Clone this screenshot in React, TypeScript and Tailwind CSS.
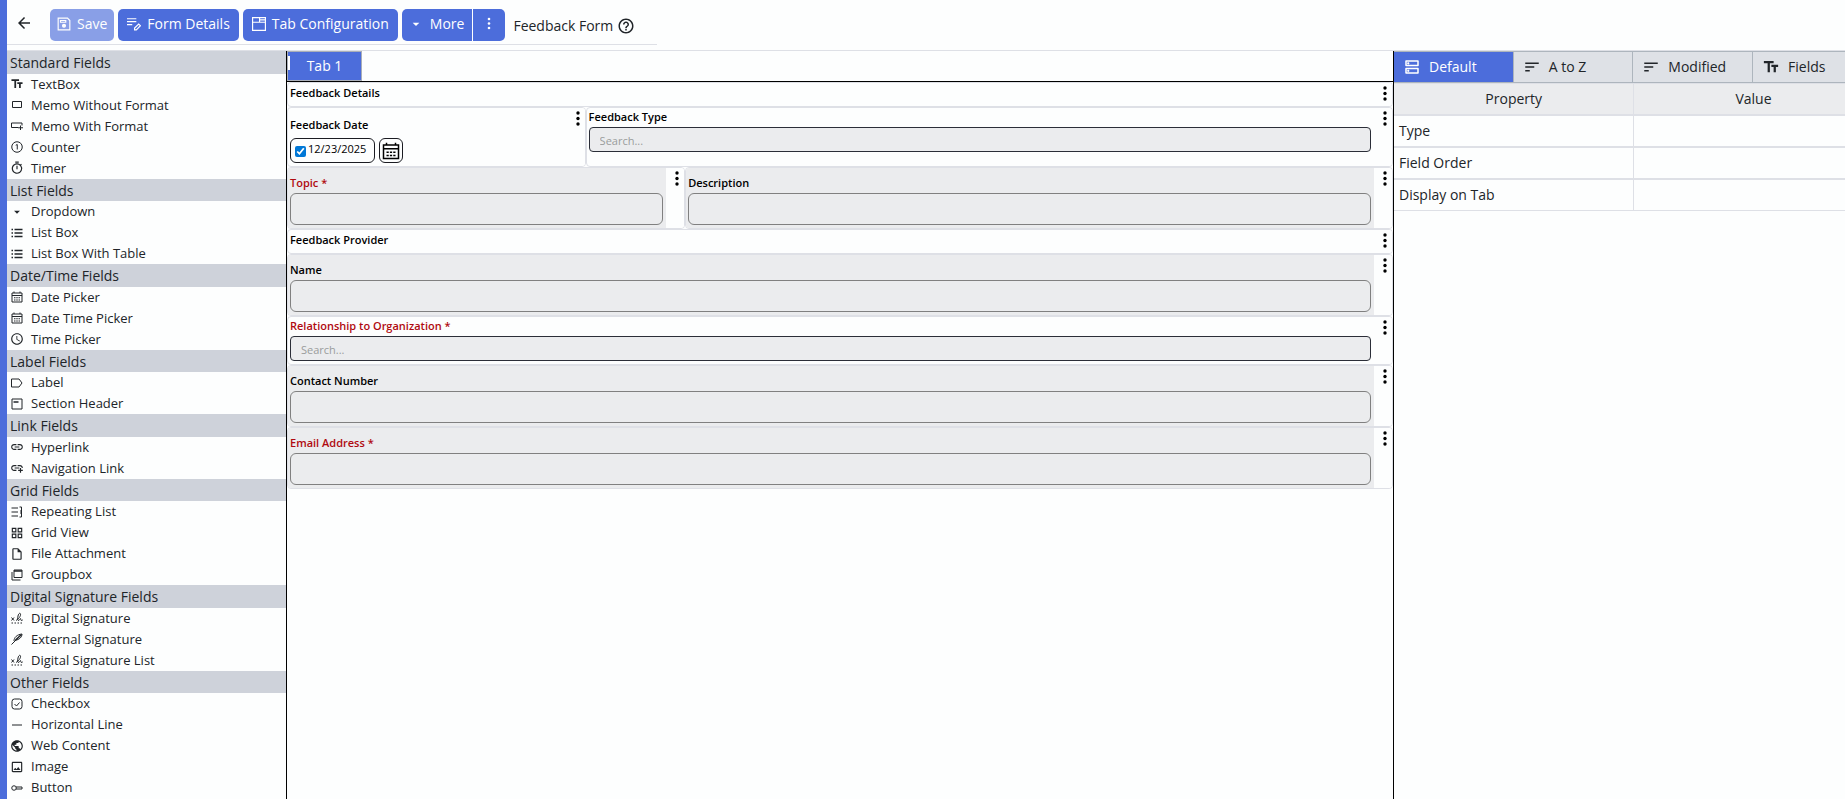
import type { ReactNode } from "react";
import clsx from "clsx";
import {
  MdAddLink,
  MdArrowBack,
  MdArrowDropDown,
  MdHelpOutline,
  MdLink,
  MdOutlineDns,
  MdOutlineGridView,
  MdOutlineImage,
  MdOutlineInsertDriveFile,
  MdOutlineTimer,
  MdPublic,
  MdSchedule,
  MdSort,
  MdTextFields,
} from "react-icons/md";

function Glyph({ children, className = "mx-px h-3 w-3" }: { children: ReactNode; className?: string }) {
  return (
    <svg
      viewBox="0 0 24 24"
      fill="none"
      stroke="currentColor"
      strokeWidth="2"
      className={className}
      aria-hidden="true"
    >
      {children}
    </svg>
  );
}

const SignatureGlyph = () => (
  <Glyph>
    <path d="M1 11l5 6M6 11l-5 6M1 22h3M7 22h3M13 22h3M19 22h3" />
    <path d="M10 17c5-3 10-9 9-13-1-3-4-1-5 4s-1 9 1 9 3-4 4-4 0 4 2 4 2-1 3-2" />
  </Glyph>
);

const ListGlyph = () => (
  <Glyph>
    <path d="M1 5h3M1 12h3M1 19h3M7 5h16M7 12h16M7 19h16" strokeWidth="3" />
  </Glyph>
);

const CalendarGlyph = ({ className }: { className?: string }) => (
  <Glyph className={className}>
    <path d="M2 4h20v18H2zM2 9h20M6 1v3M18 1v3" />
    <path d="M6 13.500h3M10.500 13.500h3M15 13.500h3M6 18h3M10.500 18h3M15 18h3" />
  </Glyph>
);

const md = "h-3.5 w-3.5";

const fieldGroups: { title: string; items: { label: string; icon: ReactNode }[] }[] = [
  {
    title: "Standard Fields",
    items: [
      { label: "TextBox", icon: <MdTextFields className={md} /> },
      { label: "Memo Without Format", icon: <Glyph><path d="M3 5h18v12H3z" /></Glyph> },
      {
        label: "Memo With Format",
        icon: <Glyph><path d="M14 15H1V6h21v5M19 11v9M14 15.500h10" /></Glyph>,
      },
      {
        label: "Counter",
        icon: <Glyph><circle cx="12" cy="12" r="10.500" /><path d="M9.500 8.500l3-1.500v10" /></Glyph>,
      },
      { label: "Timer", icon: <MdOutlineTimer className={md} /> },
    ],
  },
  {
    title: "List Fields",
    items: [
      { label: "Dropdown", icon: <MdArrowDropDown className={md} /> },
      { label: "List Box", icon: <ListGlyph /> },
      { label: "List Box With Table", icon: <ListGlyph /> },
    ],
  },
  {
    title: "Date/Time Fields",
    items: [
      { label: "Date Picker", icon: <CalendarGlyph /> },
      { label: "Date Time Picker", icon: <CalendarGlyph /> },
      { label: "Time Picker", icon: <MdSchedule className={md} /> },
    ],
  },
  {
    title: "Label Fields",
    items: [
      { label: "Label", icon: <Glyph><path d="M1 4h15l6 8-6 8H1z" /></Glyph> },
      {
        label: "Section Header",
        icon: <Glyph><path d="M2 2h20v20H2z" /><path d="M5 8h10" strokeWidth="3" /></Glyph>,
      },
    ],
  },
  {
    title: "Link Fields",
    items: [
      { label: "Hyperlink", icon: <MdLink className={md} /> },
      { label: "Navigation Link", icon: <MdAddLink className={md} /> },
    ],
  },
  {
    title: "Grid Fields",
    items: [
      {
        label: "Repeating List",
        icon: <Glyph><path d="M1 4h13M1 12h13M1 20h13M17 2h4v8h-3M21 10v4h-3M21 14v8h-4" /></Glyph>,
      },
      { label: "Grid View", icon: <MdOutlineGridView className={md} /> },
      { label: "File Attachment", icon: <MdOutlineInsertDriveFile className={md} /> },
      {
        label: "Groupbox",
        icon: <Glyph><path d="M6 2h16v15H6z" /><path d="M6 4h16" strokeWidth="3" /><path d="M2 6v16h17" /></Glyph>,
      },
    ],
  },
  {
    title: "Digital Signature Fields",
    items: [
      { label: "Digital Signature", icon: <SignatureGlyph /> },
      {
        label: "External Signature",
        icon: (
          <Glyph>
            <path d="M1 23L15 9M6 16C6 9 12 3 22 2c0 6-5 11-14 13" />
            <path d="M9 14L21 3" strokeWidth="3" />
          </Glyph>
        ),
      },
      { label: "Digital Signature List", icon: <SignatureGlyph /> },
    ],
  },
  {
    title: "Other Fields",
    items: [
      {
        label: "Checkbox",
        icon: <Glyph><rect x="2" y="2" width="20" height="20" rx="5" /><path d="M7 12l4 4 6-7" /></Glyph>,
      },
      { label: "Horizontal Line", icon: <Glyph><path d="M2 12h20" /></Glyph> },
      { label: "Web Content", icon: <MdPublic className={md} /> },
      { label: "Image", icon: <MdOutlineImage className={md} /> },
      {
        label: "Button",
        icon: <Glyph><circle cx="6" cy="12" r="4.500" /><path d="M10 10h12v4H10" /></Glyph>,
      },
    ],
  },
];

function Kebab({ label }: { label: string }) {
  return (
    <button type="button" aria-label={label} className="flex w-[18px] shrink-0 justify-end bg-[#fdfefe] pt-[3px] pr-[5px]">
      <svg viewBox="0 0 4 15" fill="currentColor" className="h-[15px] w-1">
        <circle cx="2" cy="2" r="1.700" />
        <circle cx="2" cy="7.500" r="1.700" />
        <circle cx="2" cy="13" r="1.700" />
      </svg>
    </button>
  );
}

interface CellProps {
  label: string;
  id?: string;
  kind: "header" | "text" | "search" | "date";
  required?: boolean;
  className?: string;
}

function Cell({ label, id, kind, required, className = "w-full" }: CellProps) {
  return (
    <div className={clsx("flex overflow-hidden rounded border border-[#dee0e6]", className)}>
      <div
        className={clsx(
          "min-w-0 flex-1 pr-[3px] pl-0.5",
          kind === "header" && "pb-1",
          kind === "text" && "bg-[#ebecee] pt-1.5 pb-[3px]",
          kind === "search" && "pb-[3px]",
          kind === "date" && "pt-2 pb-[3px]",
        )}
      >
        {kind === "header" ? (
          <h3 className="text-[11px] leading-[19px] font-semibold">{label}</h3>
        ) : (
          <label
            htmlFor={id}
            className={clsx(
              "block text-[11px] leading-[18px] font-semibold",
              kind === "date" ? "mb-1" : "mb-px",
              required && "text-[#b00a10]",
            )}
          >
            {required ? `${label} *` : label}
          </label>
        )}
        {kind === "text" && (
          <input id={id} type="text" className="block h-8 w-full rounded-md border border-[#808080] px-2 text-xs" />
        )}
        {kind === "search" && (
          <input
            id={id}
            type="text"
            placeholder="Search..."
            className="block h-[25px] w-full rounded border border-[#2b2e38] bg-[#ebecee] px-2.5 pt-0.5 text-[11px] placeholder:text-[#9a9c9c]"
          />
        )}
        {kind === "date" && (
          <div className="flex gap-1">
            <div className="flex h-[25px] w-[85px] items-center gap-0.5 rounded-md border border-[#1b1c22] pl-1">
              <input
                type="checkbox"
                defaultChecked
                aria-label="Use feedback date"
                className="mt-0.5 h-[11px] w-[11px] shrink-0 accent-[#0078d7]"
              />
              <input id={id} type="text" defaultValue="12/23/2025" className="w-full min-w-0 pb-0.5 text-[11px]" />
            </div>
            <button
              type="button"
              aria-label="Open calendar"
              className="flex h-[25px] w-6 items-center justify-center rounded-md border border-[#1b1c22]"
            >
              <CalendarGlyph className="h-[18px] w-[18px] shrink-0" />
            </button>
          </div>
        )}
      </div>
      <Kebab label={`${label} options`} />
    </div>
  );
}

function Toolbar() {
  const button = "flex h-8 items-center rounded-[5px] bg-[#4c6ddb] pb-0.5 text-sm whitespace-nowrap text-white";
  return (
    <header className="flex h-[45px] w-[650px] shrink-0 items-center border-b border-[#dee0e6] pt-[5px]">
      <button type="button" aria-label="Back" className="ml-2 flex w-[35px] shrink-0 justify-start pb-1">
        <MdArrowBack className="h-[18px] w-[18px]" />
      </button>
      <div className="flex gap-1">
        <button type="button" disabled className={clsx(button, "gap-1.5 px-[7px] opacity-65")}>
          <Glyph className="h-3.5 w-3.5">
            <path d="M2 2h16l4 4v16H2z" />
            <path d="M6 6h9v3H6z" />
            <circle cx="12" cy="15" r="2.500" fill="currentColor" />
          </Glyph>
          Save
        </button>
        <button type="button" className={clsx(button, "gap-1.5 px-[9px]")}>
          <Glyph className="h-3.5 w-3.5">
            <path d="M0 3h16M0 8h16M0 13h9M13 22v-3l7-7 3 3-7 7z" />
          </Glyph>
          Form Details
        </button>
        <button type="button" className={clsx(button, "gap-1.5 px-[9px]")}>
          <Glyph className="h-3.5 w-3.5">
            <path d="M1 1h22v22H1zM1 9h22M13 1v8M13 5h10" />
          </Glyph>
          Tab Configuration
        </button>
        <div className="flex">
          <button type="button" className={clsx(button, "gap-1.5 rounded-r-none border-r border-white pr-2 pl-1.5")}>
            <MdArrowDropDown className="h-4 w-4" />
            More
          </button>
          <button type="button" aria-label="More actions" className={clsx(button, "w-8 justify-center rounded-l-none")}>
            <svg viewBox="0 0 4 15" fill="currentColor" className="h-[15px] w-1">
              <circle cx="2" cy="3" r="1.300" />
              <circle cx="2" cy="7.500" r="1.300" />
              <circle cx="2" cy="12" r="1.300" />
            </svg>
          </button>
        </div>
      </div>
      <h1 className="ml-2 flex items-center gap-1 pt-0.5 text-sm whitespace-nowrap">
        Feedback Form
        <MdHelpOutline className="h-[18px] w-[18px]" />
      </h1>
    </header>
  );
}

function FieldPalette() {
  return (
    <nav className="w-[279px] shrink-0">
      {fieldGroups.map((group) => (
        <section key={group.title}>
          <h2 className="bg-[#ced2da] pl-[3px] text-[15px] leading-normal">
            <span className="text-sm leading-none">{group.title}</span>
          </h2>
          <ul className="text-[13px] leading-[21px]">
            {group.items.map((item) => (
              <li key={item.label} className="flex items-center gap-[7px] pl-[3px]">
                {item.icon}
                <span>{item.label}</span>
              </li>
            ))}
          </ul>
        </section>
      ))}
    </nav>
  );
}

function FormCanvas() {
  return (
    <main className="w-[60vw] shrink-0 border-l border-black">
      <div className="flex border-b border-black">
        <button
          type="button"
          className="relative h-[30px] w-[75px] border border-[#a9aeb8] bg-[#4c6ddb] text-sm text-white"
        >
          <span className="absolute top-1 left-0 h-3.5 w-0.5 bg-white" />
          Tab 1
        </button>
      </div>
      <form className="text-black">
        <Cell kind="header" label="Feedback Details" />
        <div className="flex">
          <Cell kind="date" id="feedback-date" label="Feedback Date" className="w-[27%]" />
          <Cell kind="search" id="feedback-type" label="Feedback Type" className="w-[73%]" />
        </div>
        <div className="flex">
          <Cell kind="text" id="topic" label="Topic" required className="w-[36%]" />
          <Cell kind="text" id="description" label="Description" className="w-[64%]" />
        </div>
        <Cell kind="header" label="Feedback Provider" />
        <Cell kind="text" id="name" label="Name" />
        <Cell kind="search" id="relationship" label="Relationship to Organization" required />
        <Cell kind="text" id="contact" label="Contact Number" />
        <Cell kind="text" id="email" label="Email Address" required />
      </form>
    </main>
  );
}

const tabIcon = "h-[18px] w-[18px]";

const propertyTabs = [
  { label: "Default", icon: <MdOutlineDns className={tabIcon} /> },
  { label: "A to Z", icon: <MdSort className={tabIcon} /> },
  { label: "Modified", icon: <MdSort className={tabIcon} /> },
  { label: "Fields", icon: <MdTextFields className={tabIcon} /> },
];

function PropertyPanel() {
  return (
    <aside className="w-[26vw] shrink-0 border-l border-black text-sm">
      <div className="flex border-y border-[#adb5bd]">
        {propertyTabs.map((tab, index) => (
          <button
            key={tab.label}
            type="button"
            className={clsx(
              "flex h-[30px] flex-1 items-center gap-2 border-r border-[#adb5bd] pl-[9px]",
              index === 0 ? "bg-[#4c6ddb] text-white" : "bg-[#dee1e6]",
            )}
          >
            {tab.icon}
            {tab.label}
          </button>
        ))}
      </div>
      <table className="w-full table-fixed border-separate border-spacing-0">
        <thead>
          <tr className="h-8 bg-[#ebecee]">
            <th className="border-y border-[#dee0e6] p-0 font-normal">Property</th>
            <th className="border-y border-l border-[#dee0e6] p-0 font-normal">Value</th>
          </tr>
        </thead>
        <tbody>
          {["Type", "Field Order", "Display on Tab"].map((name) => (
            <tr key={name} className="h-8">
              <td className="border-y border-[#dee0e6] p-0 pl-[5px]">{name}</td>
              <td className="border-y border-l border-[#dee0e6] p-0" />
            </tr>
          ))}
        </tbody>
      </table>
    </aside>
  );
}

export default function App() {
  return (
    <div className="flex min-h-screen flex-col overflow-hidden border-l-[7px] border-[#4c6ddb] bg-[#fdfefe] font-['Open_Sans','Noto_Sans',sans-serif] text-[#212529]">
      <Toolbar />
      <div className="mt-[5px] flex flex-1 border-t border-[#dee0e6]">
        <FieldPalette />
        <FormCanvas />
        <PropertyPanel />
      </div>
    </div>
  );
}
